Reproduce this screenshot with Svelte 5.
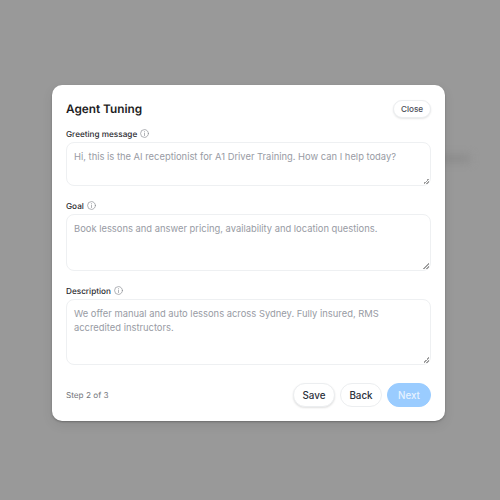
<script lang="ts">
	const fields = [
		{
			label: 'Greeting message',
			height: 44,
			gap: 15,
			hint: 'Hi, this is the AI receptionist for A1 Driver Training. How can I help today?'
		},
		{
			label: 'Goal',
			height: 57,
			gap: 15,
			hint: 'Book lessons and answer pricing, availability and location questions.'
		},
		{
			label: 'Description',
			height: 66,
			gap: 0,
			hint: 'We offer manual and auto lessons across Sydney. Fully insured, RMS accredited instructors.'
		}
	];
</script>

<div class="backdrop">
	<!-- blurred page content showing through the overlay -->
	<div class="smudge"></div>

	<div class="modal">
		<header>
			<h2>Agent Tuning</h2>
			<button class="pill close">Close</button>
		</header>

		{#each fields as field}
			<div class="field" style="margin-bottom: {field.gap}px">
				<div class="label">
					<span>{field.label}</span>
					<svg width="9" height="9" viewBox="0 0 24 24" fill="none" stroke="currentColor" stroke-width="1.8" stroke-linecap="round">
						<circle cx="12" cy="12" r="10.5" />
						<path d="M12 11v6.5M12 7v.2" />
					</svg>
				</div>
				<textarea style="height: {field.height}px" placeholder={field.hint}></textarea>
			</div>
		{/each}

		<footer>
			<span class="step">Step 2 of 3</span>
			<div class="actions">
				<button class="pill save">Save</button>
				<button class="pill back">Back</button>
				<button class="pill next">Next</button>
			</div>
		</footer>
	</div>
</div>

<style>
	:global(body) {
		margin: 0;
	}

	.backdrop {
		position: relative;
		overflow: hidden;
		width: 500px;
		height: 500px;
		background: #999;
		display: flex;
		align-items: flex-start;
		justify-content: flex-start;
		padding: 85px 0 0 52px;
		box-sizing: border-box;
		font-family: Inter, sans-serif;
		text-rendering: geometricPrecision;
	}

	.smudge {
		position: absolute;
		left: 440px;
		top: 155px;
		width: 30px;
		height: 7px;
		background: #8a8a8a;
		filter: blur(4px);
	}

	.modal {
		position: relative;
		width: 393px;
		height: 336px;
		box-sizing: border-box;
		background: #fff;
		border-radius: 10px;
		padding: 14px;
		box-shadow:
			0 1px 2px rgb(0 0 0 / 0.25),
			0 4px 12px rgb(0 0 0 / 0.08);
		display: flex;
		flex-direction: column;
	}

	header {
		display: flex;
		align-items: center;
		justify-content: space-between;
		height: 19px;
		margin-bottom: 11px;
	}

	h2 {
		margin: 0;
		font-size: 11.8px;
		font-weight: 600;
		color: #1c1c22;
	}

	.pill {
		font-family: inherit;
		border-radius: 999px;
		background: #fff;
		border: 1px solid #eceef0;
		color: #2a2f3a;
		font-weight: 500;
		padding: 0;
	}

	.close {
		width: 38px;
		height: 18px;
		font-size: 8.2px;
		color: #4a4d57;
		box-shadow: 0 1px 2px rgb(0 0 0 / 0.1);
	}

	.field {
		display: flex;
		flex-direction: column;
	}

	.label {
		display: flex;
		align-items: center;
		gap: 3px;
		height: 9px;
		margin-bottom: 4px;
		font-size: 8.2px;
		font-weight: 500;
		color: #2b2b30;
	}

	.label svg {
		color: #8a8d93;
	}

	textarea {
		box-sizing: border-box;
		width: 100%;
		border: 1px solid #eef0f2;
		border-radius: 8px;
		padding: 7px;
		margin: 0;
		font-family: inherit;
		font-size: 9.4px;
		line-height: 14px;
		display: block;
		color: #2b2b30;
		background: #fff;
		outline: none;
	}

	textarea::placeholder {
		color: #989ba4;
		opacity: 1;
	}

	/* small grip instead of the full-size native one */
	textarea::-webkit-resizer {
		background: linear-gradient(
				135deg,
				transparent 50%,
				#a0a0a0 50%,
				#a0a0a0 64%,
				#fff 64%,
				#fff 74%,
				#a0a0a0 74%,
				#a0a0a0 90%,
				transparent 90%
			)
			right 1px bottom 1px / 6px 6px no-repeat;
	}

	footer {
		display: flex;
		align-items: center;
		justify-content: space-between;
		margin-top: auto;
	}

	.step {
		font-size: 8.2px;
		color: #75777c;
	}

	.actions {
		display: flex;
		gap: 5px;
	}

	.actions .pill {
		width: 42px;
		height: 24px;
		font-size: 9.8px;
	}

	.save {
		box-shadow: 0 1px 2px rgb(0 0 0 / 0.12);
	}

	.actions .next {
		width: 44px;
		background: #9accff;
		border-color: #9accff;
		color: #e6f2ff;
	}
</style>
